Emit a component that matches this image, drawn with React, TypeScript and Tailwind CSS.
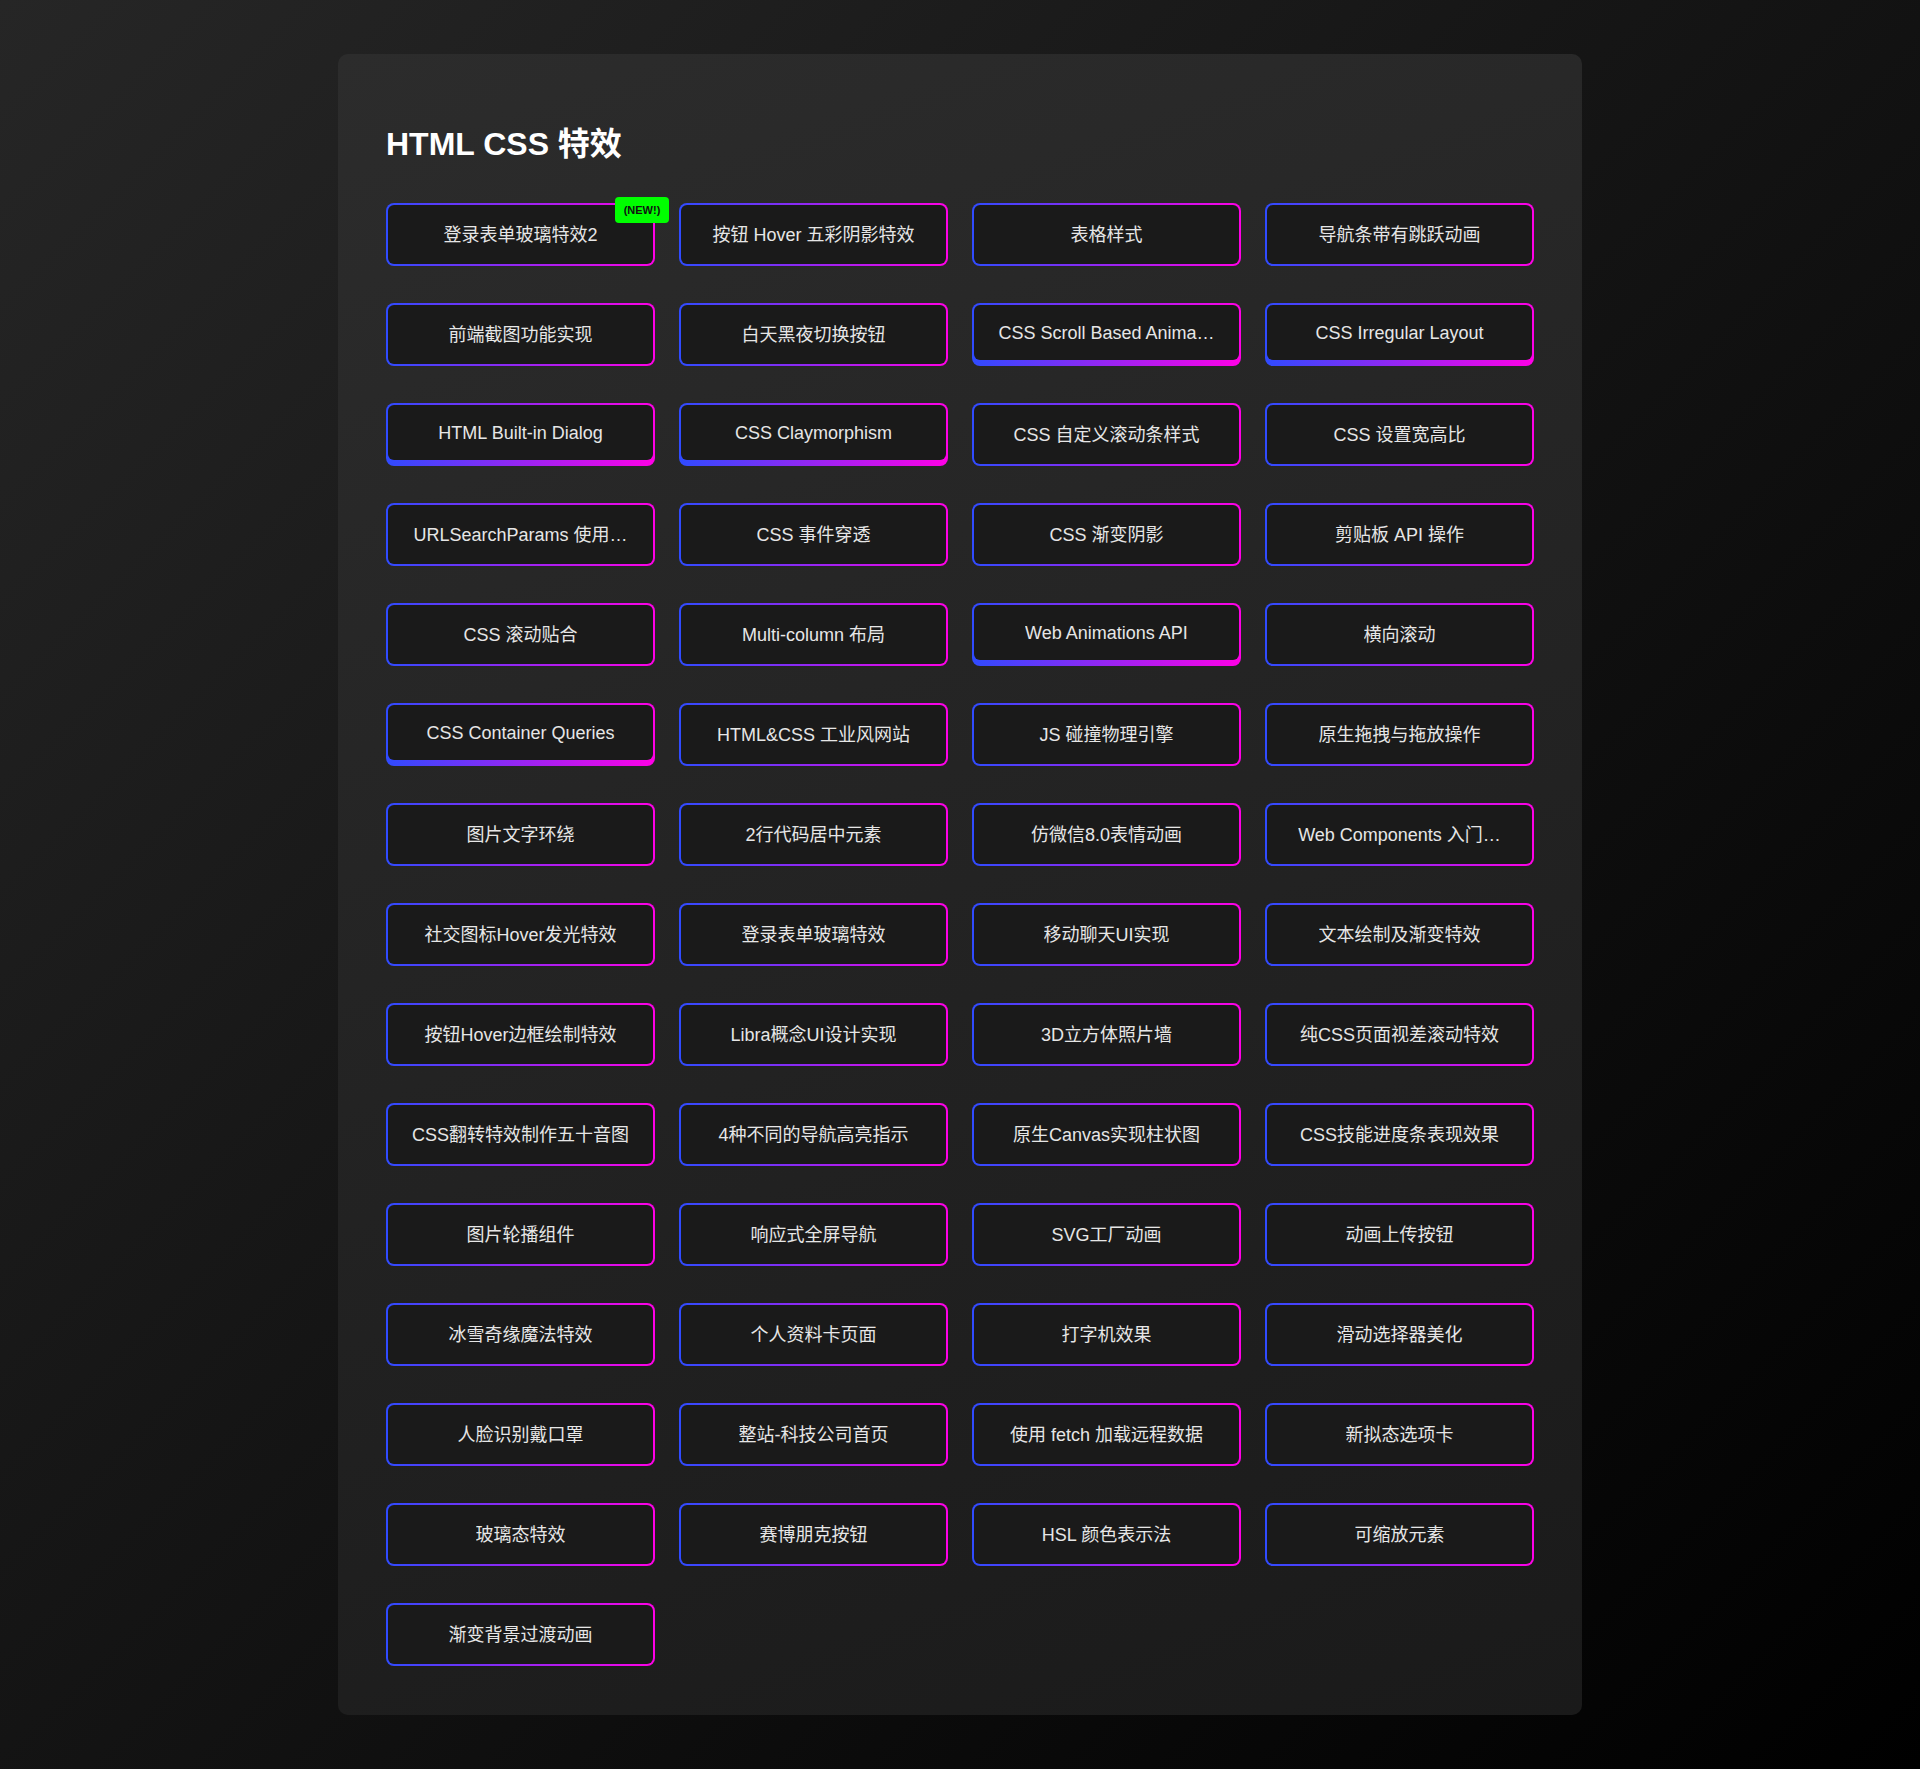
import React from 'react';

type Item = { label: string; isNew?: boolean; raised?: boolean };

const items: Item[] = [
  { label: '登录表单玻璃特效2', isNew: true },
  { label: '按钮 Hover 五彩阴影特效' },
  { label: '表格样式' },
  { label: '导航条带有跳跃动画' },
  { label: '前端截图功能实现' },
  { label: '白天黑夜切换按钮' },
  { label: 'CSS Scroll Based Anima…', raised: true },
  { label: 'CSS Irregular Layout', raised: true },
  { label: 'HTML Built-in Dialog', raised: true },
  { label: 'CSS Claymorphism', raised: true },
  { label: 'CSS 自定义滚动条样式' },
  { label: 'CSS 设置宽高比' },
  { label: 'URLSearchParams 使用…' },
  { label: 'CSS 事件穿透' },
  { label: 'CSS 渐变阴影' },
  { label: '剪贴板 API 操作' },
  { label: 'CSS 滚动贴合' },
  { label: 'Multi-column 布局' },
  { label: 'Web Animations API', raised: true },
  { label: '横向滚动' },
  { label: 'CSS Container Queries', raised: true },
  { label: 'HTML&CSS 工业风网站' },
  { label: 'JS 碰撞物理引擎' },
  { label: '原生拖拽与拖放操作' },
  { label: '图片文字环绕' },
  { label: '2行代码居中元素' },
  { label: '仿微信8.0表情动画' },
  { label: 'Web Components 入门…' },
  { label: '社交图标Hover发光特效' },
  { label: '登录表单玻璃特效' },
  { label: '移动聊天UI实现' },
  { label: '文本绘制及渐变特效' },
  { label: '按钮Hover边框绘制特效' },
  { label: 'Libra概念UI设计实现' },
  { label: '3D立方体照片墙' },
  { label: '纯CSS页面视差滚动特效' },
  { label: 'CSS翻转特效制作五十音图' },
  { label: '4种不同的导航高亮指示' },
  { label: '原生Canvas实现柱状图' },
  { label: 'CSS技能进度条表现效果' },
  { label: '图片轮播组件' },
  { label: '响应式全屏导航' },
  { label: 'SVG工厂动画' },
  { label: '动画上传按钮' },
  { label: '冰雪奇缘魔法特效' },
  { label: '个人资料卡页面' },
  { label: '打字机效果' },
  { label: '滑动选择器美化' },
  { label: '人脸识别戴口罩' },
  { label: '整站-科技公司首页' },
  { label: '使用 fetch 加载远程数据' },
  { label: '新拟态选项卡' },
  { label: '玻璃态特效' },
  { label: '赛博朋克按钮' },
  { label: 'HSL 颜色表示法' },
  { label: '可缩放元素' },
  { label: '渐变背景过渡动画' },
];

function DemoLink({ item }: { item: Item }) {
  return (
    <a
      href="#"
      className={`relative block h-[63px] rounded-[8px] bg-[linear-gradient(90deg,#2f4bff,#ff00e6)] px-[2px] pt-[2px] ${
        item.raised ? 'pb-[6px]' : 'pb-[2px]'
      }`}
    >
      <div className="flex h-full items-center justify-center rounded-[6px] bg-[#1a1a1a] px-[21px]">
        <span className="truncate text-[18px] leading-[22px] text-[#e6e6e6]">{item.label}</span>
      </div>
      {item.isNew && (
        <span className="absolute -top-[6px] -right-[14px] flex h-[26px] w-[54px] items-center justify-center rounded-[4px] bg-[#00ff00] text-[11px] font-bold text-[#111]">
          (NEW!)
        </span>
      )}
    </a>
  );
}

export default function App() {
  return (
    <div
      className="min-h-screen bg-[linear-gradient(135deg,#262626,#000000)] py-[54px]"
      style={{ fontFamily: '"Liberation Sans", Arial, "Noto Sans CJK SC", sans-serif' }}
    >
      <main className="mx-auto w-[1244px] rounded-[10px] bg-[linear-gradient(160deg,#2c2c2c,#1a1a1a)] px-[48px] pt-[48px] pb-[49px]">
        {/* Title */}
        <h1 className="mt-[22px] mb-[39px] h-[40px] text-[32px] leading-[40px] font-bold text-white">
          HTML CSS 特效
        </h1>

        {/* Demo list */}
        <div className="grid grid-cols-4 gap-x-[24px] gap-y-[37px]">
          {items.map((item) => (
            <DemoLink key={item.label} item={item} />
          ))}
        </div>
      </main>
    </div>
  );
}
